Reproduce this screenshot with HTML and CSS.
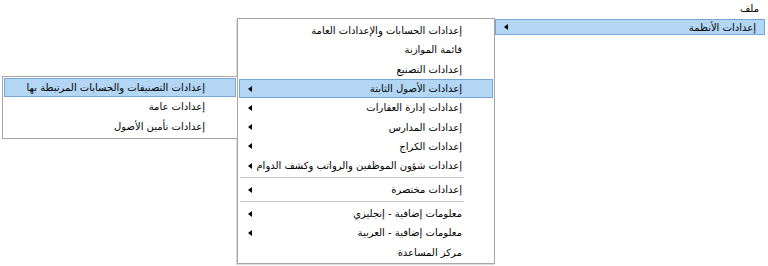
FILE: index.html
```html
<!DOCTYPE html>
<html lang="ar" dir="rtl">
<head>
<meta charset="utf-8">
<link rel="stylesheet" href="styles.css">
</head>
<body>
<div class="menubar"><span class="top-item">ملف</span></div>

<div class="menu root">
  <div class="item active"><span class="label">إعدادات الأنظمة</span><span class="arrow"></span></div>
</div>

<div class="menu sub1">
  <div class="item"><span class="gutter"></span><span class="label">إعدادات الحسابات والإعدادات العامة</span></div>
  <div class="item"><span class="gutter"></span><span class="label">قائمة الموازنة</span></div>
  <div class="item"><span class="gutter"></span><span class="label">إعدادات التصنيع</span></div>
  <div class="item active"><span class="gutter"></span><span class="label">إعدادات الأصول الثابتة</span><span class="arrow"></span></div>
  <div class="item"><span class="gutter"></span><span class="label">إعدادات إدارة العقارات</span><span class="arrow"></span></div>
  <div class="item"><span class="gutter"></span><span class="label">إعدادات المدارس</span><span class="arrow"></span></div>
  <div class="item"><span class="gutter"></span><span class="label">إعدادات الكراج</span><span class="arrow"></span></div>
  <div class="item"><span class="gutter"></span><span class="label">إعدادات شؤون الموظفين والرواتب وكشف الدوام</span><span class="arrow"></span></div>
  <div class="sep"></div>
  <div class="item"><span class="gutter"></span><span class="label">إعدادات مختصرة</span><span class="arrow"></span></div>
  <div class="sep"></div>
  <div class="item"><span class="gutter"></span><span class="label">معلومات إضافية - إنجليزي</span><span class="arrow"></span></div>
  <div class="item"><span class="gutter"></span><span class="label">معلومات إضافية - العربية</span><span class="arrow"></span></div>
  <div class="item"><span class="gutter"></span><span class="label">مركز المساعدة</span></div>
</div>

<div class="menu sub2">
  <div class="item active"><span class="gutter"></span><span class="label">إعدادات التصنيفات والحسابات المرتبطة بها</span></div>
  <div class="item"><span class="gutter"></span><span class="label">إعدادات عامة</span></div>
  <div class="item"><span class="gutter"></span><span class="label">إعدادات تأمين الأصول</span></div>
</div>
</body>
</html>
```

FILE: styles.css
```css
html, body {
  margin: 0;
  padding: 0;
  background: #ffffff;
}
body {
  width: 768px;
  height: 266px;
  position: relative;
  overflow: hidden;
  font-family: "DejaVu Sans", sans-serif;
  font-size: 10px;
  color: #000;
}
.menubar {
  height: 17px;
  display: flex;
  align-items: center;
  padding-right: 9px;
}
.top-item {
  line-height: 14px;
}
.menu {
  position: absolute;
  background: #fff;
  box-sizing: border-box;
}
.root {
  left: 495px;
  top: 19px;
  width: 270px;
}
.root .item {
  height: 16px;
  padding-right: 8px;
}
.sub1 {
  left: 237px;
  top: 18px;
  width: 258px;
  height: 246px;
  border: 1px solid #a6a6a6;
  padding: 2px 1px;
  box-shadow: -1px 1px 0 #dcdcdc;
}
.sub2 {
  left: 2px;
  top: 76px;
  width: 236px;
  border: 1px solid #a6a6a6;
  padding: 1px 1px 2px 1px;
}
.item {
  display: flex;
  align-items: center;
  height: 19.3px;
  box-sizing: border-box;
  border: 1px solid transparent;
  position: relative;
}
.item.active {
  background: #b3d6f5;
  border-color: #77a6d6;
}
.gutter {
  width: 30px;
  flex: none;
}
.label {
  flex: 1;
  white-space: nowrap;
}
.arrow {
  flex: none;
  width: 0;
  height: 0;
  margin-left: 8px;
  border-top: 3.5px solid transparent;
  border-bottom: 3.5px solid transparent;
  border-right: 4px solid #000;
}
.sep {
  height: 4.6px;
  display: flex;
  align-items: center;
  padding-right: 29px;
  padding-left: 1px;
}
.sep::before {
  content: "";
  flex: 1;
  height: 1px;
  background: #c8c8c8;
}
```
